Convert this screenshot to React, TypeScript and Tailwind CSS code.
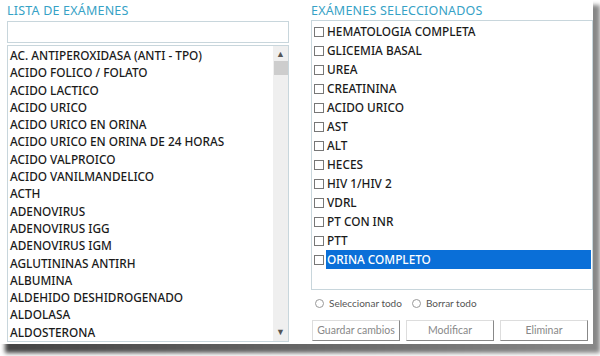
import React from "react";

const examenes = [
  "AC. ANTIPEROXIDASA (ANTI - TPO)",
  "ACIDO FOLICO / FOLATO",
  "ACIDO LACTICO",
  "ACIDO URICO",
  "ACIDO URICO EN ORINA",
  "ACIDO URICO EN ORINA DE 24 HORAS",
  "ACIDO VALPROICO",
  "ACIDO VANILMANDELICO",
  "ACTH",
  "ADENOVIRUS",
  "ADENOVIRUS IGG",
  "ADENOVIRUS IGM",
  "AGLUTININAS ANTIRH",
  "ALBUMINA",
  "ALDEHIDO DESHIDROGENADO",
  "ALDOLASA",
  "ALDOSTERONA",
];

const seleccionados = [
  "HEMATOLOGIA COMPLETA",
  "GLICEMIA BASAL",
  "UREA",
  "CREATININA",
  "ACIDO URICO",
  "AST",
  "ALT",
  "HECES",
  "HIV 1/HIV 2",
  "VDRL",
  "PT CON INR",
  "PTT",
  "ORINA COMPLETO",
];

export default function App() {
  return (
    <div className="w-[600px] h-[356px] bg-white relative overflow-hidden font-['Noto_Sans',sans-serif]">
      {/* window shadow */}
      <div className="absolute left-[5px] top-[5px] w-[595px] h-[348px] bg-[linear-gradient(to_right,#444,#888)] blur-[2px]" />
      <div className="relative w-[593px] h-[344px] bg-white flex gap-[22px] pl-[7px] pt-[3px]">
        <div className="w-[282px] flex flex-col">
          <h2 className="text-[12.5px] leading-[16px] text-[#36a2c6] tracking-[0.2px]">LISTA DE EXÁMENES</h2>
          <input className="mt-[2px] h-[22px] border border-[#c8d6dc] outline-none" />
          <div className="mt-[2px] h-[297px] border border-[#c8d6dc] flex">
            <ul className="flex-1 pl-[2px] pt-[1px]">
              {examenes.map((e) => (
                <li key={e} className="h-[17.3px] leading-[17.3px] text-[11.8px] font-medium text-[#1a1a1a] whitespace-nowrap">
                  {e}
                </li>
              ))}
            </ul>
            <div className="w-[15px] bg-[#efefef] flex flex-col items-center">
              <span className="text-[9px] text-[#555] leading-[14px] mt-[1px]">▲</span>
              <div className="w-[14px] h-[14px] bg-[#cdcdcd]" />
              <div className="flex-1" />
              <span className="text-[9px] text-[#555] leading-[14px] mb-[2px]">▼</span>
            </div>
          </div>
        </div>
        <div className="w-[282px] flex flex-col">
          <h2 className="text-[12.5px] leading-[16px] text-[#36a2c6] tracking-[0.2px]">EXÁMENES SELECCIONADOS</h2>
          <div className="mt-[1px] h-[270px] border border-[#c8d6dc] pt-[1px] pl-[2px] pr-[1px]">
            {seleccionados.map((s, i) => (
              <div key={s} className="h-[19px] flex items-center gap-[2px]">
                <span className="w-[10px] h-[10px] border border-[#777] bg-white shrink-0" />
                <span
                  className={
                    i === seleccionados.length - 1
                      ? "flex-1 h-[19px] leading-[19px] text-[11.8px] font-medium text-white bg-[#0a6fd8] pl-[1px]"
                      : "flex-1 leading-[19px] text-[11.8px] font-medium text-[#1a1a1a] pl-[1px]"
                  }
                >
                  {s}
                </span>
              </div>
            ))}
          </div>
          <div className="flex items-center gap-[10px] mt-[6px] pl-[4px] text-[10px] text-[#555] font-['Lato',sans-serif]">
            <label className="flex items-center gap-[5px]">
              <span className="w-[9px] h-[9px] rounded-full border border-[#999] bg-white" />
              Seleccionar todo
            </label>
            <label className="flex items-center gap-[5px]">
              <span className="w-[9px] h-[9px] rounded-full border border-[#999] bg-white" />
              Borrar todo
            </label>
          </div>
          <div className="flex gap-[6px] mt-[9px] pl-[1px]">
            {["Guardar cambios", "Modificar", "Eliminar"].map((b) => (
              <button
                key={b}
                className="w-[88px] h-[21px] border border-[#ddd] border-r-[#888] border-b-[#888] bg-white text-[10.5px] text-[#888] font-['Lato',sans-serif]"
              >
                {b}
              </button>
            ))}
          </div>
        </div>
      </div>
    </div>
  );
}
